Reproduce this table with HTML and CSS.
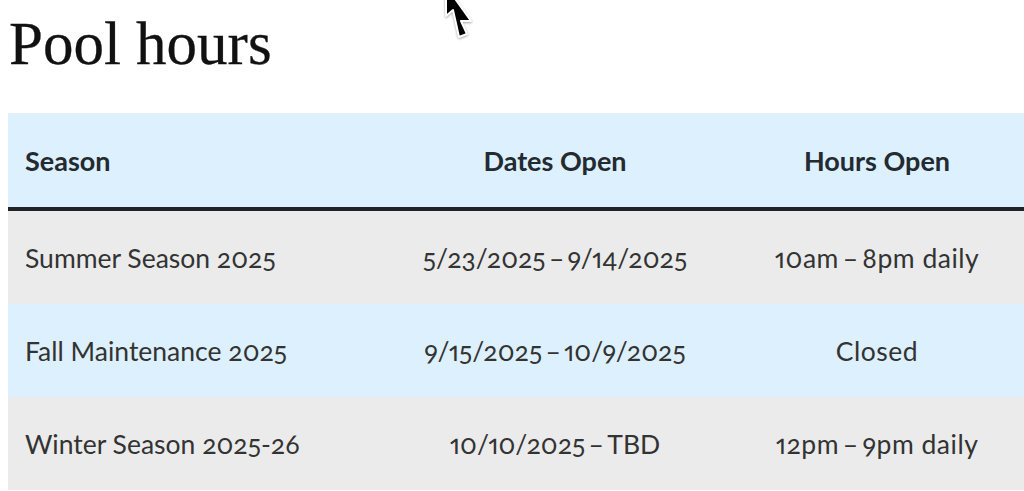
FILE: index.html
```html
<!DOCTYPE html>
<html lang="en">
<head>
<meta charset="utf-8">
<title>Pool hours</title>
<link rel="stylesheet" href="styles.css">
</head>
<body>
<h1 class="title">Pool hours</h1>
<table class="hours">
  <colgroup>
    <col class="c1"><col class="c2"><col class="c3">
  </colgroup>
  <thead>
    <tr>
      <th class="left">Season</th>
      <th>Dates Open</th>
      <th>Hours Open</th>
    </tr>
  </thead>
  <tbody>
    <tr class="odd">
      <td class="left">Summer Season 2025</td>
      <td>5/23/2025&thinsp;–&thinsp;9/14/2025</td>
      <td class="time">10am&thinsp;–&thinsp;8pm daily</td>
    </tr>
    <tr class="even">
      <td class="left">Fall Maintenance 2025</td>
      <td>9/15/2025&thinsp;–&thinsp;10/9/2025</td>
      <td class="time">Closed</td>
    </tr>
    <tr class="odd">
      <td class="left">Winter Season 2025-26</td>
      <td>10/10/2025&thinsp;–&thinsp;TBD</td>
      <td class="time">12pm&thinsp;–&thinsp;9pm daily</td>
    </tr>
  </tbody>
</table>
<svg class="cursor" width="34" height="56" viewBox="440 -16 34 56" aria-hidden="true">
  <polygon points="446,-14 446,16 453,10 459,37 467,34 461,21 471,21" fill="#000" stroke="#fff" stroke-width="2" stroke-linejoin="round"/>
</svg>
</body>
</html>
```

FILE: styles.css
```css
html, body {
  margin: 0;
  padding: 0;
  background: #ffffff;
  overflow: hidden;
}
body {
  padding: 8px 0 0 8px;
  font-family: "Lato", "Open Sans", sans-serif;
  color: #2e2e2e;
  position: relative;
  height: 491px;
  box-sizing: border-box;
}
.title {
  font-family: "Liberation Serif", "Times New Roman", serif;
  font-weight: 400;
  font-size: 61px;
  line-height: 60px;
  margin: 6px 0 39px 1px;
  color: #111111;
  -webkit-text-stroke: 0.3px #111111;
}
.hours {
  width: 1016px;
  border-collapse: collapse;
  table-layout: fixed;
  font-variant-numeric: oldstyle-nums proportional-nums;
}
.c1 { width: 372px; }
.c2 { width: 350px; }
.c3 { width: 294px; }
.hours th {
  background: #ddf0fd;
  height: 94px;
  padding: 0;
  font-weight: 700;
  font-size: 27px;
  color: #232a31;
  border-bottom: 4px solid #1f2326;
  text-align: center;
  vertical-align: middle;
}
.hours td {
  height: 93px;
  padding: 0;
  font-size: 26.5px;
  text-align: center;
  vertical-align: middle;
  color: #333333;
}
.hours .time {
  letter-spacing: 0.5px;
}
.hours .left {
  text-align: left;
  padding-left: 17px;
}
.odd td { background: #ebebeb; }
.even td { background: #ddf0fd; }
.cursor {
  position: absolute;
  left: 440px;
  top: -16px;
  filter: drop-shadow(0 1px 1px rgba(0,0,0,0.35));
}
```
